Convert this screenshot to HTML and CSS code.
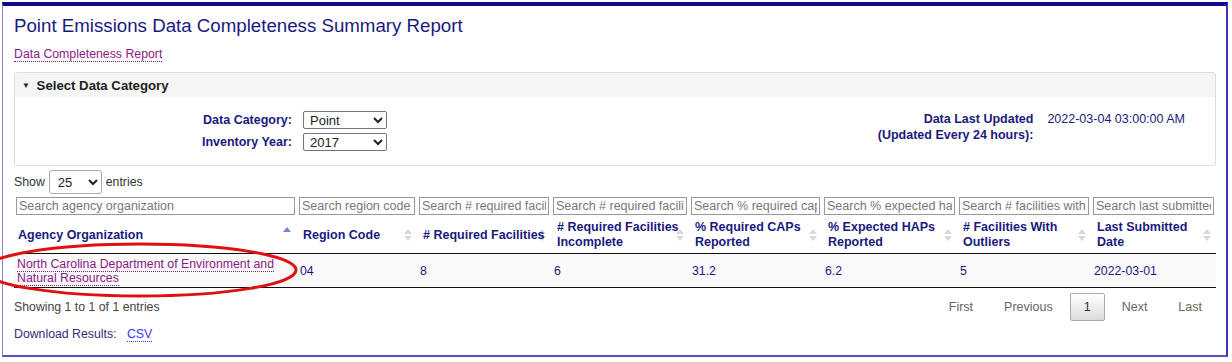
FILE: index.html
```html
<!DOCTYPE html>
<html lang="en">
<head>
    <meta charset="UTF-8">
    <title>Point Emissions Data Completeness Summary Report</title>
    <link rel="stylesheet" href="styles.css">
</head>
<body>
<div class="frame">
    <h1 class="title">Point Emissions Data Completeness Summary Report</h1>
    <a class="crumb" href="#">Data Completeness Report</a>

    <div class="panel">
        <div class="panel-head"><span class="caret">&#9660;</span> Select Data Category</div>
        <div class="panel-body">
            <div class="filters">
                <label for="dataCategory">Data Category:</label>
                <select id="dataCategory" class="small-select"><option>Point</option></select>
                <label for="inventoryYear">Inventory Year:</label>
                <select id="inventoryYear" class="small-select"><option>2017</option></select>
            </div>
            <div class="updated">
                <div class="updated-label">Data Last Updated<br>(Updated Every 24 hours):</div>
                <div class="updated-value">2022-03-04 03:00:00 AM</div>
            </div>
        </div>
    </div>

    <div class="length">
        Show
        <select class="length-select"><option>25</option></select>
        entries
    </div>

    <table class="report">
        <colgroup>
            <col class="c-agency"><col class="c-region"><col class="c-req"><col class="c-inc">
            <col class="c-caps"><col class="c-haps"><col class="c-out"><col class="c-date">
        </colgroup>
        <thead>
            <tr class="search-row">
                <td><input type="text" placeholder="Search agency organization"></td>
                <td><input type="text" placeholder="Search region code"></td>
                <td><input type="text" placeholder="Search # required facilities"></td>
                <td><input type="text" placeholder="Search # required facilities incomplete"></td>
                <td><input type="text" placeholder="Search % required caps"></td>
                <td><input type="text" placeholder="Search % expected haps"></td>
                <td><input type="text" placeholder="Search # facilities with outliers"></td>
                <td><input type="text" placeholder="Search last submitted date"></td>
            </tr>
            <tr class="head-row">
                <th class="sorted">Agency Organization</th>
                <th>Region Code</th>
                <th class="nowrap"># Required Facilities</th>
                <th># Required Facilities Incomplete</th>
                <th>% Required CAPs Reported</th>
                <th>% Expected HAPs Reported</th>
                <th># Facilities With Outliers</th>
                <th>Last Submitted Date</th>
            </tr>
        </thead>
        <tbody>
            <tr>
                <td><a href="#">North Carolina Department of Environment and Natural Resources</a></td>
                <td>04</td>
                <td>8</td>
                <td>6</td>
                <td>31.2</td>
                <td>6.2</td>
                <td>5</td>
                <td>2022-03-01</td>
            </tr>
        </tbody>
    </table>

    <div class="table-foot">
        <div class="info">Showing 1 to 1 of 1 entries</div>
        <div class="pager">
            <span>First</span>
            <span>Previous</span>
            <span class="current">1</span>
            <span>Next</span>
            <span>Last</span>
        </div>
    </div>

    <div class="download">Download Results: <a href="#">CSV</a></div>
</div>

<!-- red annotation circled on the screenshot -->
<svg class="mark" width="320" height="70" viewBox="0 0 320 70">
    <ellipse cx="150" cy="33" rx="156" ry="26" fill="none" stroke="#e01010" stroke-width="3"/>
</svg>
</body>
</html>
```

FILE: styles.css
```css
body {
    margin: 0;
    font-family: "Liberation Sans", Arial, sans-serif;
    font-size: 12.3px;
    color: #333;
    background: #fff;
}

.frame {
    position: relative;
    width: 1202px;
    height: 322px;
    margin: 2px 0 0 2px;
    padding: 7px 10px 20px 11px;
    border-top: 4px solid #0a0a8a;
    border-left: 1px solid #8a86c8;
    border-right: 2px solid #3a38c0;
    border-bottom: 2px solid #5552c6;
}

.title {
    margin: 0;
    font-size: 18.7px;
    font-weight: normal;
    color: #1a1a7e;
    line-height: 26px;
}

.crumb {
    display: inline-block;
    margin-top: 8px;
    color: #8a1a8a;
    text-decoration: none;
    border-bottom: 1px dotted #8a1a8a;
    line-height: 14px;
}

.panel {
    margin-top: 10px;
    border: 1px solid #ddd;
    border-radius: 3px;
}

.panel-head {
    background: #f5f5f5;
    height: 24px;
    line-height: 25px;
    padding-left: 7px;
    font-weight: bold;
    font-size: 13.2px;
    color: #222;
}

.caret {
    font-size: 8px;
    position: relative;
    top: -2px;
    margin-right: 3px;
}

.panel-body {
    display: flex;
    justify-content: space-between;
    padding: 14px 0 14px;
    height: 40px;
}

.filters {
    display: grid;
    grid-template-columns: 277px auto;
    column-gap: 11px;
    row-gap: 3px;
    align-items: center;
}

.filters label {
    text-align: right;
    font-weight: bold;
    color: #1a1a7e;
    font-size: 12.5px;
}

.small-select {
    width: 84px;
    height: 18px;
    font-family: inherit;
    font-size: 13px;
    padding: 0 2px;
    border: 1px solid #767676;
    border-radius: 2px;
    background: #fff;
    color: #222;
}

.updated {
    display: flex;
    gap: 14px;
    margin-right: 30px;
    line-height: 16px;
    color: #1a1a7e;
    font-size: 12.5px;
}

.updated-label {
    text-align: right;
    font-weight: bold;
}

.length {
    margin-top: 4px;
    display: flex;
    align-items: center;
    gap: 4px;
    color: #333;
}

.length select {
    width: 53px;
    height: 24px;
    font-family: inherit;
    font-size: 13px;
    border: 1px solid #aaa;
    border-radius: 3px;
    padding: 0 4px;
    color: #222;
    background: #fff;
}

.report {
    width: 1202px;
    table-layout: fixed;
    border-collapse: collapse;
    margin-top: 2px;
}

.c-agency { width: 283px; }
.c-region { width: 120px; }
.c-req { width: 134px; }
.c-inc { width: 138px; }
.c-caps { width: 133px; }
.c-haps { width: 135px; }
.c-out { width: 134px; }
.c-date { width: 125px; }

.search-row td {
    padding: 1px 2px 1px 2px;
}

.search-row input {
    width: 100%;
    box-sizing: border-box;
    height: 18px;
    font-family: inherit;
    font-size: 12.5px;
    border: 1px solid #999;
    padding: 0 2px;
    color: #333;
}

.search-row input::placeholder {
    color: #777;
}

.head-row th {
    text-align: left;
    font-weight: bold;
    font-size: 12.5px;
    line-height: 15px;
    color: #1a1a7e;
    padding: 4px 4px 3px 6px;
    height: 29px;
    border-bottom: 1px solid #111;
    position: relative;
    vertical-align: middle;
}

.head-row th:first-child {
    padding-left: 4px;
}

.head-row th.nowrap {
    white-space: nowrap;
}

/* sort arrows, drawn behind the header text */
.head-row th::before,
.head-row th::after {
    content: "";
    position: absolute;
    z-index: -1;
    right: 5px;
    top: 50%;
    width: 0;
    height: 0;
    border-left: 4px solid transparent;
    border-right: 4px solid transparent;
}

.head-row th::before {
    margin-top: 1px;
    border-top: 5px solid #d8d8d8;
}

.head-row th::after {
    margin-top: -6px;
    border-bottom: 5px solid #d8d8d8;
}

.head-row th.sorted::before {
    display: none;
}

.head-row th.sorted::after {
    border-bottom-color: #7f7fd5;
    margin-top: -8px;
    right: 6px;
}

.report tbody td {
    background: #f9f9f9;
    color: #1a1a7e;
    padding: 2px 3px;
    height: 29px;
    border-bottom: 1px solid #111;
    line-height: 14px;
    font-size: 12.3px;
}

.report tbody a {
    color: #8a1a8a;
    text-decoration: none;
    border-bottom: 1px dotted #8a1a8a;
}

.table-foot {
    display: flex;
    justify-content: space-between;
    align-items: center;
    margin-top: 5px;
}

.info {
    color: #444;
}

.pager {
    display: flex;
    align-items: center;
}

.pager span {
    padding: 6px 14px;
    line-height: 14px;
    color: #666;
    margin-left: 3px;
    font-size: 12.5px;
}

.pager .current {
    padding: 6px 13px;
    border: 1px solid #aaa;
    border-radius: 2px;
    background: linear-gradient(#fff, #dcdcdc);
    color: #333;
}

.download {
    margin-top: 6px;
    color: #3a2a7a;
}

.download a {
    margin-left: 7px;
    color: #3a3af0;
    text-decoration: none;
    border-bottom: 1px dotted #3a3af0;
}

.mark {
    position: absolute;
    left: -10px;
    top: 237px;
}
```
